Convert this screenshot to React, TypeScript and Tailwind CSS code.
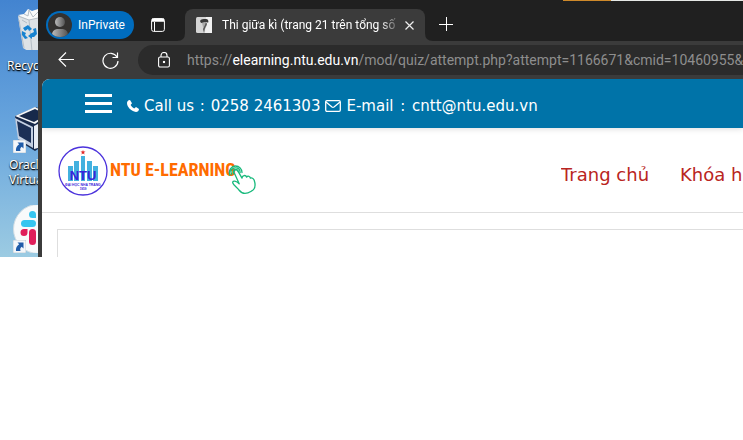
import type { ReactNode } from "react";

function Shortcut() {
  return (
    <svg className="absolute bottom-0 left-[13px]" width="13" height="13" viewBox="0 0 13 13" aria-hidden="true">
      <rect width="13" height="13" fill="#f4f7fa" stroke="#9aa8b5" strokeWidth=".5" />
      <path d="M4.500 2.500h6v6L8.700 6.700C7 8 7 9 7.500 11H3C2.500 8 4 6 6.200 4.300z" fill="#1f5ba8" />
    </svg>
  );
}

function RecycleIcon() {
  return (
    <svg width="38" height="50" viewBox="0 0 38 50" aria-hidden="true">
      <path d="M18 16l5 32 5 3h10V16z" fill="#dde2e6" />
      <path d="M18 15l6-1 4-5 4 2 6-2v9l-9 2z" fill="#f8f9fa" />
      <path d="M18 16l11 4 9-2M29 20l3 31M19 20l5 28M24 14l4 2 1-6 4 7 5-5M22 20l5 3" fill="none" stroke="#b4bdc5" />
      <path d="M25 31l-2-3 5-3 4 4-3 2-1-2zM22 31l4 2-1 2 3 3-3 1-3-4zM30 34l4-2-1-3 3-1 1 6-3 3h-2v2l-4-3 4-3v2z" fill="#1682d0" />
    </svg>
  );
}

function VirtualBoxIcon() {
  return (
    <svg width="38" height="48" viewBox="0 0 38 48" aria-hidden="true">
      <path d="M15 11L36 2l16 8-3 27-14 9-16-10z" fill="#17294b" />
      <path d="M15 11L35 2l14 7-14 10z" fill="#f4f6f8" />
      <path d="M19 11l16-7 12 6-13 7z" fill="#17294b" />
      <path d="M15 13l18 9v21l-15-9z" fill="#c3cfe2" />
      <path d="M17 16l14 7v15l-12-7z" fill="#1b2f56" />
      <path d="M34 21l4-2v24l-4 1z" fill="#e8edf5" />
    </svg>
  );
}

function SlackIcon() {
  return (
    <svg width="38" height="48" viewBox="0 0 38 48" aria-hidden="true">
      <circle cx="38" cy="24" r="24.500" fill="#f8fafb" stroke="#d1dde4" />
      <rect x="21" y="15" width="15" height="7" rx="3.500" fill="#36c5f0" />
      <path d="M36 13h-3.500a3.500 3.500 0 1 1 3.500-3.500z" fill="#36c5f0" />
      <path d="M27.500 24v3.500a3.500 3.500 0 1 1-3.500-3.500z" fill="#e01e5a" />
      <rect x="29" y="24" width="7" height="16" rx="3.500" fill="#e01e5a" />
    </svg>
  );
}

function DesktopItem({ icon, children, shortcut = false }: { icon: ReactNode; children?: ReactNode; shortcut?: boolean }) {
  return (
    <div className="text-xs leading-[15px] whitespace-nowrap text-white [text-shadow:1px_1px_2px_#000,0_1px_1px_#000]">
      <div className="relative">
        {icon}
        {shortcut && <Shortcut />}
      </div>
      {children}
    </div>
  );
}

function Logo() {
  return (
    <svg className="mt-px" width="50" height="50" viewBox="0 0 50 50" aria-hidden="true">
      <circle cx="25" cy="25" r="24" fill="#fff" stroke="#4b32dc" strokeWidth="1.300" />
      <path d="M10 20h5v15h-5zM16 15h5v20h-5zM23 10h4v25h-4zM29 15h5v20h-5zM35 20h5v15h-5z" fill="#42b1df" />
      <path d="M25 4l.7 1.600h1.800L26 6.700l.6 1.800L25 7.400l-1.600 1.100.6-1.800-1.500-1.100h1.800z" fill="#e32929" />
      <text x="25" y="34" textAnchor="middle" fontFamily="Liberation Sans, sans-serif" fontSize="13" fontWeight="700" fill="#3824d9">NTU</text>
      <text x="25" y="40" textAnchor="middle" fontFamily="Liberation Sans, sans-serif" fontSize="3.400" fontWeight="700" fill="#3824d9">ĐẠI HỌC NHA TRANG</text>
      <text x="25" y="44" textAnchor="middle" fontFamily="Liberation Sans, sans-serif" fontSize="3" fontWeight="700" fill="#3824d9">1959</text>
    </svg>
  );
}

function Pointer() {
  return (
    <svg className="-ml-2 mt-5 shrink-0" width="28" height="30" viewBox="0 0 30 32" fill="none" stroke="#19ba7d" strokeWidth="1.400" strokeLinecap="round" strokeLinejoin="round" aria-hidden="true">
      <path d="M7 6c1-2 3-1 4 1l4 7c0-3 4-4 5-1 1-2 4-1 4 1 2-1 3 0 4 2 2 6 1 10-3 12-5 3-10 3-13-1-2-3-6-5-7-8 0-3 4-2 7 1L7 9C6 8 6 7 7 6z" />
      <path d="M4 10C2 6 4 3 8 3c3 0 5 2 5 5M2 11C0 5 4 1 8 1c4 0 7 3 7 7M6 9C4 5 10 3 11 7" />
    </svg>
  );
}

function Tab() {
  return (
    <div className="relative mt-[9px] flex h-8 w-60 shrink-0 items-center rounded-t-lg bg-[#3b3b3b] pl-[11px]">
      <svg className="absolute bottom-0 -left-2" width="8" height="8" aria-hidden="true"><path d="M0 8h8V0Q8 8 0 8" fill="#3b3b3b" /></svg>
      <svg className="absolute -right-2 bottom-0" width="8" height="8" aria-hidden="true"><path d="M8 8H0V0Q0 8 8 8" fill="#3b3b3b" /></svg>
      <svg className="shrink-0" width="16" height="16" viewBox="0 0 16 16" aria-hidden="true">
        <rect width="16" height="16" rx="1.500" fill="#d5d5d5" />
        <path d="M10 0h6v16H9z" fill="#f1f1f1" />
        <path d="M4 4c1-2 3-2 6-2 2 0 3 2 2 4l-1-1-6 1z" fill="#393939" />
        <path d="M6 6l4-1 1 3-2 4-2-2z" fill="#aaa" />
        <path d="M10 5l1 2-2 4-1 5-1-4 2-4z" fill="#555" />
      </svg>
      <span className="ml-2.5 w-[177px] overflow-hidden font-['Roboto',sans-serif] text-xs whitespace-nowrap text-white [mask-image:linear-gradient(to_right,black_158px,transparent_179px)]">
        Thi giữa kì (trang 21 trên tổng số
      </span>
      <button aria-label="Close tab" className="ml-1.5 flex size-4 items-center">
        <svg width="9" height="9" viewBox="0 0 9 9" stroke="#eee" strokeWidth="1.200"><path d="M.5.5l8 8m0-8l-8 8" /></svg>
      </button>
    </div>
  );
}

function TabBar() {
  return (
    <div className="relative flex h-[41px] overflow-hidden bg-[#202020]">
      <div className="absolute top-0 right-0 left-[525px] flex h-px">
        <i className="w-12 bg-[#ce892a]" />
        <i className="flex-1 bg-[#e5e8e5]" />
      </div>
      <button className="mt-[11px] ml-2 flex h-7 w-[88px] shrink-0 items-center rounded-full bg-[#006cbe] pl-0.5 font-['Roboto',sans-serif] text-xs text-white">
        <svg width="24" height="24" viewBox="0 0 24 24" aria-hidden="true">
          <defs>
            <linearGradient id="avatar"><stop stopColor="#bbb" /><stop offset="1" stopColor="#535353" /></linearGradient>
            <clipPath id="round"><circle cx="12" cy="12" r="12" /></clipPath>
          </defs>
          <circle cx="12" cy="12" r="12" fill="#343230" />
          <g clipPath="url(#round)" fill="url(#avatar)"><circle cx="12" cy="9" r="5" /><path d="M4 24v-2q0-5 5-6h6q5 1 5 6v2z" /></g>
        </svg>
        <span className="ml-1.5">InPrivate</span>
      </button>
      <button aria-label="Tab actions" className="mt-[18px] ml-[17px] size-3.5 shrink-0">
        <svg width="14" height="14" viewBox="0 0 14 14" fill="none" stroke="#fff"><rect x=".6" y=".6" width="12.800" height="12.800" rx="2" /><path d="M3.500 4v9M1 3h12" /><path d="M1 2h12" strokeWidth="3" /></svg>
      </button>
      <div className="w-5 shrink-0" />
      <Tab />
      <button aria-label="New tab" className="mt-[17px] ml-[14px] size-3.5 shrink-0">
        <svg width="14" height="14" viewBox="0 0 14 14" stroke="#fff"><path d="M7.500 0v14M0 7.500h14" /></svg>
      </button>
    </div>
  );
}

function AddressBar() {
  return (
    <div className="flex h-[38px] items-center bg-[#3b3b3b] pl-5 text-white">
      <button aria-label="Back" className="shrink-0">
        <svg width="16" height="16" viewBox="0 0 16 16" fill="none" stroke="currentColor" strokeWidth="1.100"><path d="M16 7.500H1M8 .5l-7 7 7 7" /></svg>
      </button>
      <button aria-label="Refresh" className="ml-7 shrink-0">
        <svg width="17" height="17" viewBox="0 0 17 17" fill="none" stroke="currentColor" strokeWidth="1.200"><path d="M15 5A7.500 7.500 0 1 0 16 9M10.500 5.500h5V.5" /></svg>
      </button>
      <div className="ml-[19px] flex h-[30px] min-w-0 flex-1 items-center overflow-hidden rounded-l-full bg-[#2b2b2b] pl-5">
        <svg className="shrink-0" width="12" height="16" viewBox="0 0 12 16" fill="none" stroke="#fff" strokeWidth="1.100" aria-hidden="true"><rect x=".6" y="5" width="10.800" height="10" rx="1.500" /><path d="M3 5V3.500a3 3 0 0 1 6 0V5" /><rect x="5.500" y="9.500" width="1" height="1" fill="#fff" /></svg>
        <a href="#page" className="ml-[17px] font-['Roboto',sans-serif] text-sm whitespace-nowrap text-[#8e8e8e]">
          https://<span className="text-white">elearning.ntu.edu.vn</span>/mod/quiz/attempt.php?attempt=1166671&amp;cmid=10460955&amp;
        </a>
      </div>
    </div>
  );
}

function Page() {
  return (
    <main id="page" className="ml-1 overflow-hidden rounded-tl-lg bg-white font-['DejaVu_Sans',sans-serif]">
      <div className="relative flex h-[49px] items-center bg-[#0073a8] pt-1 pl-[43px] text-[15px] whitespace-nowrap text-white shadow-[0_1px_6px_#ddd]">
        <button aria-label="Menu" className="mb-1 flex w-[27px] shrink-0 flex-col gap-[5px]">
          <i className="h-[3px] w-full bg-white" />
          <i className="h-[3px] w-full bg-white" />
          <i className="h-[3px] w-full bg-white" />
        </button>
        <svg className="ml-[15px] shrink-0" width="12" height="12" viewBox="0 0 12 12" fill="currentColor" aria-hidden="true"><path d="M3 0l2 3.200L3.600 5Q5 7.500 7.200 8.500L9 7l3 2c0 2-1.500 3-3 3C4 11 0 7 0 3 0 1.500 1 0 3 0z" /></svg>
        <span className="ml-[5px] pt-0.5">Call us <span className="px-px">:</span> 0258 2461303</span>
        <svg className="ml-[5px] shrink-0" width="16" height="12" viewBox="0 0 16 12" fill="none" stroke="currentColor" strokeWidth="1.300" aria-hidden="true"><rect x=".7" y=".7" width="14.600" height="10.600" rx="1.200" /><path d="M1 2l6 5q1 .7 2 0l6-5" /></svg>
        <span className="ml-[5px] pt-0.5">E-mail <span className="px-0.5">:</span> cntt@ntu.edu.vn</span>
      </div>
      <header className="flex h-[85px] items-center border-b border-[#dedede] pl-4 whitespace-nowrap">
        <a href="#page" className="flex shrink-0 items-center text-[#ff6b00]">
          <Logo />
          <span className="ml-0.5 font-['Liberation_Sans_Narrow','Roboto_Condensed','Roboto',sans-serif] text-lg leading-5 font-bold">NTU E-LEARNING</span>
          <Pointer />
        </a>
        <nav className="ml-auto flex w-[182px] shrink-0 gap-[31px] overflow-hidden pt-2.5 text-lg text-[#b92521]">
          <a href="#page" className="shrink-0">Trang chủ</a>
          <a href="#page" className="shrink-0">Khóa học</a>
        </nav>
      </header>
      <div className="pt-4 pl-[15px]">
        <div className="h-7 border-t border-l border-[#dedede]" />
      </div>
    </main>
  );
}

export default function App() {
  return (
    <div className="min-h-screen bg-white font-['Noto_Sans',sans-serif]">
      <div className="flex">
        <aside className="flex h-[257px] w-[38px] shrink-0 flex-col overflow-hidden bg-linear-to-b from-[#4384d0] via-[#68a5dd] to-[#9ccbe2]">
          <DesktopItem icon={<RecycleIcon />}>
            <p className="pt-2 pl-[7px]">Recycle Bin</p>
          </DesktopItem>
          <div className="pt-8">
            <DesktopItem icon={<VirtualBoxIcon />} shortcut>
              <p className="pt-1 pl-[9px]">Oracle VM<br />VirtualBox</p>
            </DesktopItem>
          </div>
          <div className="pt-[18px]">
            <DesktopItem icon={<SlackIcon />} shortcut />
          </div>
        </aside>
        <section className="min-w-0 flex-1 bg-[#3b3b3b]">
          <TabBar />
          <AddressBar />
          <Page />
        </section>
      </div>
    </div>
  );
}
